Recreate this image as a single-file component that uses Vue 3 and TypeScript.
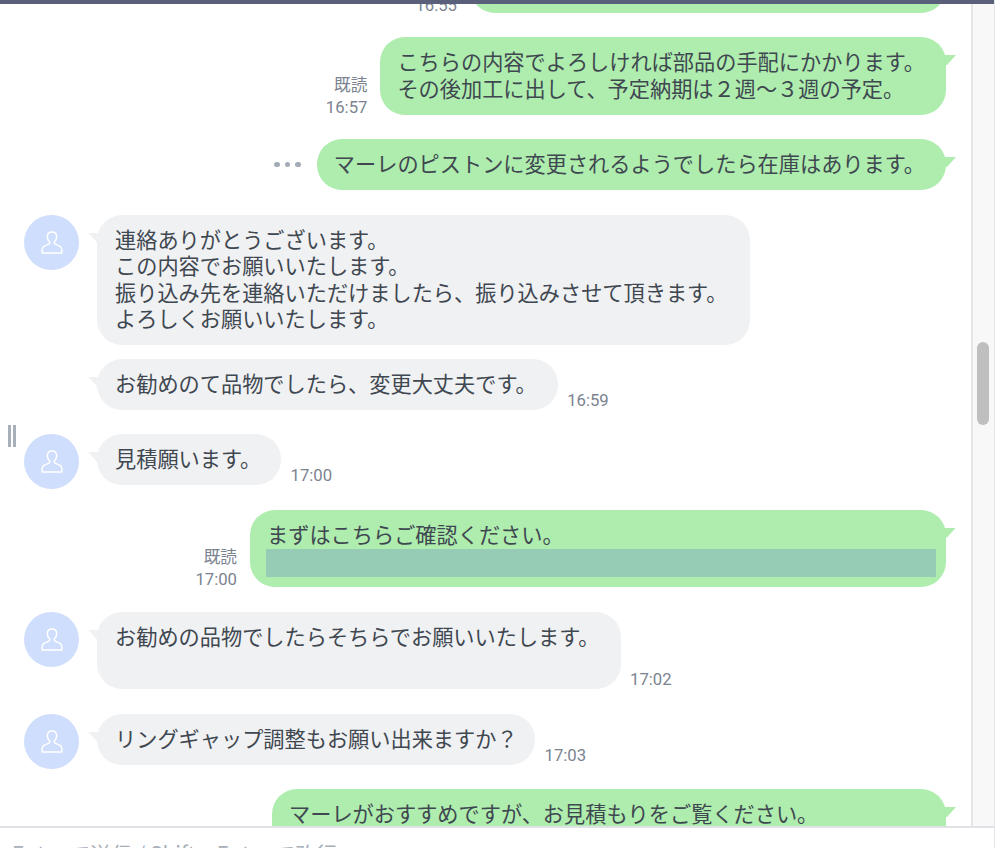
<script setup lang="ts">
interface Message {
  id: number;
  side: 'in' | 'out';
  lines: string[];
  time?: string;
  read?: boolean;
  pending?: boolean;
  avatar?: boolean;
  compact?: boolean;
  redacted?: boolean;
  width?: number;
}

const messages: Message[] = [
  { id: 1, side: 'out', lines: [''], time: '16:55', width: 476 },
  {
    id: 2,
    side: 'out',
    lines: [
      'こちらの内容でよろしければ部品の手配にかかります。',
      'その後加工に出して、予定納期は２週〜３週の予定。',
    ],
    time: '16:57',
    read: true,
  },
  { id: 3, side: 'out', lines: ['マーレのピストンに変更されるようでしたら在庫はあります。'], pending: true },
  {
    id: 4,
    side: 'in',
    avatar: true,
    width: 653,
    lines: [
      '連絡ありがとうございます。',
      'この内容でお願いいたします。',
      '振り込み先を連絡いただけましたら、振り込みさせて頂きます。',
      'よろしくお願いいたします。',
    ],
  },
  { id: 5, side: 'in', compact: true, lines: ['お勧めのて品物でしたら、変更大丈夫です。'], time: '16:59' },
  { id: 6, side: 'in', avatar: true, lines: ['見積願います。'], time: '17:00', width: 184 },
  { id: 7, side: 'out', lines: ['まずはこちらご確認ください。'], time: '17:00', read: true, redacted: true, width: 696 },
  { id: 8, side: 'in', avatar: true, lines: ['お勧めの品物でしたらそちらでお願いいたします。', ''], time: '17:02' },
  { id: 9, side: 'in', avatar: true, lines: ['リングギャップ調整もお願い出来ますか？'], time: '17:03', width: 438 },
  { id: 10, side: 'out', lines: ['マーレがおすすめですが、お見積もりをご覧ください。', ''], width: 674 },
];
</script>

<template>
  <div class="app">
    <div class="top-bar"></div>
    <div class="main">
      <div class="chat">
        <span class="grip"></span>
        <div class="list">
          <div
            v-for="m in messages"
            :key="m.id"
            class="row"
            :class="[m.side, { compact: m.compact }]"
          >
            <div v-if="m.side === 'out' && m.pending" class="dots">
              <i></i><i></i><i></i>
            </div>
            <div v-if="m.side === 'out' && m.time" class="meta">
              <div v-if="m.read">既読</div>
              <div>{{ m.time }}</div>
            </div>
            <div v-if="m.avatar" class="avatar">
              <svg width="22" height="23" viewBox="0 0 22 23" fill="none">
                <path
                  d="M11 1c-2.9 0-4.7 2.100-4.700 4.800 0 2 .9 3.700 2 4.700.6.6.6 1.700 0 2.200-.8.8-3.200 1.500-5 2.500C2 16 1.200 17 1.200 18.600V22h19.600v-3.400c0-1.600-.8-2.600-2.100-3.400-1.800-1-4.200-1.700-5-2.500-.6-.5-.6-1.600 0-2.200 1.100-1 2-2.700 2-4.700C15.700 3.100 13.900 1 11 1z"
                  stroke="#fff"
                  stroke-width="1.5"
                  stroke-linejoin="round"
                />
              </svg>
            </div>
            <div
              class="bubble"
              :class="{ 'no-avatar': m.side === 'in' && !m.avatar }"
              :style="m.width ? { width: m.width + 'px' } : undefined"
            >
              <div v-for="(line, i) in m.lines" :key="i" class="line">{{ line }}</div>
              <div v-if="m.redacted" class="redacted"></div>
            </div>
            <div v-if="m.side === 'in' && m.time" class="meta">{{ m.time }}</div>
          </div>
        </div>
      </div>
      <div class="scrollbar">
        <div class="thumb"></div>
      </div>
    </div>
    <div class="footer">Enter で送信 / Shift + Enter で改行</div>
  </div>
</template>

<style>
html,
body {
  background: #fff;
}
</style>

<style scoped>
.app {
  box-sizing: border-box;
  width: 995px;
  height: 848px;
  display: flex;
  flex-direction: column;
  overflow: hidden;
  border-right: 1px solid #e3e5ea;
  font-family: "Noto Sans CJK JP", "Liberation Sans", sans-serif;
  color: #3f4750;
}
.top-bar {
  height: 4px;
  flex: none;
  background: #5a6079;
}
.main {
  flex: 1;
  min-height: 0;
  display: flex;
}
.chat {
  flex: 1;
  min-width: 0;
  position: relative;
  overflow: hidden;
}
.grip {
  position: absolute;
  left: 8px;
  top: 421px;
  width: 8px;
  height: 22px;
  border-left: 3px solid #a7afb9;
  border-right: 3px solid #a7afb9;
  box-sizing: border-box;
}
.list {
  margin-top: -67px;
  padding: 0 25px 0 24px;
  display: flex;
  flex-direction: column;
}
.row {
  display: flex;
  margin-top: 24.5px;
}
.row.compact {
  margin-top: 13.5px;
}
.row.out {
  justify-content: flex-end;
}
.avatar {
  width: 55px;
  height: 55px;
  margin-right: 18px;
  margin-bottom: -4px;
  flex: none;
  border-radius: 50%;
  background: #cfdefc;
  display: flex;
  align-items: center;
  justify-content: center;
}
.bubble {
  position: relative;
  box-sizing: border-box;
  padding: 11.25px 21px 13.25px 18px;
  border-radius: 25px;
  font-size: 21.2px;
  line-height: 26.5px;
  white-space: nowrap;
}
.out .bubble {
  padding-left: 17px;
}
.bubble::after {
  content: "";
  position: absolute;
  top: 18px;
  width: 12px;
  height: 10px;
}
.in .bubble {
  background: #f0f1f3;
}
.in .bubble::after {
  left: -9px;
  background: #f0f1f3;
  clip-path: polygon(0 0, 100% 0, 100% 100%, 75% 100%);
}
.out .bubble {
  background: #aeedae;
}
.out .bubble::after {
  right: -10px;
  background: #aeedae;
  clip-path: polygon(0 0, 100% 0, 25% 100%, 0 100%);
}
.bubble.no-avatar {
  margin-left: 73px;
}
.line {
  min-height: 26.5px;
}
.redacted {
  width: 670px;
  height: 28px;
  margin: 2px -17px -3.5px -1px;
  background: #96ccb5;
}
.meta {
  align-self: flex-end;
  font-family: Roboto, "Noto Sans CJK JP", sans-serif;
  font-size: 16.7px;
  line-height: 22px;
  color: #7b8390;
}
.out .meta {
  margin: 0 13px -4px 0;
  text-align: right;
}
.in .meta {
  margin: 0 0 -2px 9.5px;
}
.dots {
  align-self: center;
  display: flex;
  gap: 5px;
  margin-right: 16px;
}
.dots i {
  width: 5.5px;
  height: 5.5px;
  border-radius: 50%;
  background: #a3abb6;
}
.scrollbar {
  width: 23px;
  flex: none;
  box-sizing: border-box;
  background: #f8f8f8;
  border-left: 2px solid #e6e6e8;
  position: relative;
}
.thumb {
  position: absolute;
  left: 4px;
  top: 338px;
  width: 12px;
  height: 83px;
  border-radius: 6px;
  background: #bfbfbf;
}
.footer {
  height: 22px;
  flex: none;
  box-sizing: border-box;
  border-top: 2px solid #dfe3e8;
  padding: 12px 0 0 12px;
  font-size: 21px;
  line-height: 26px;
  color: #a9afb8;
}
</style>
